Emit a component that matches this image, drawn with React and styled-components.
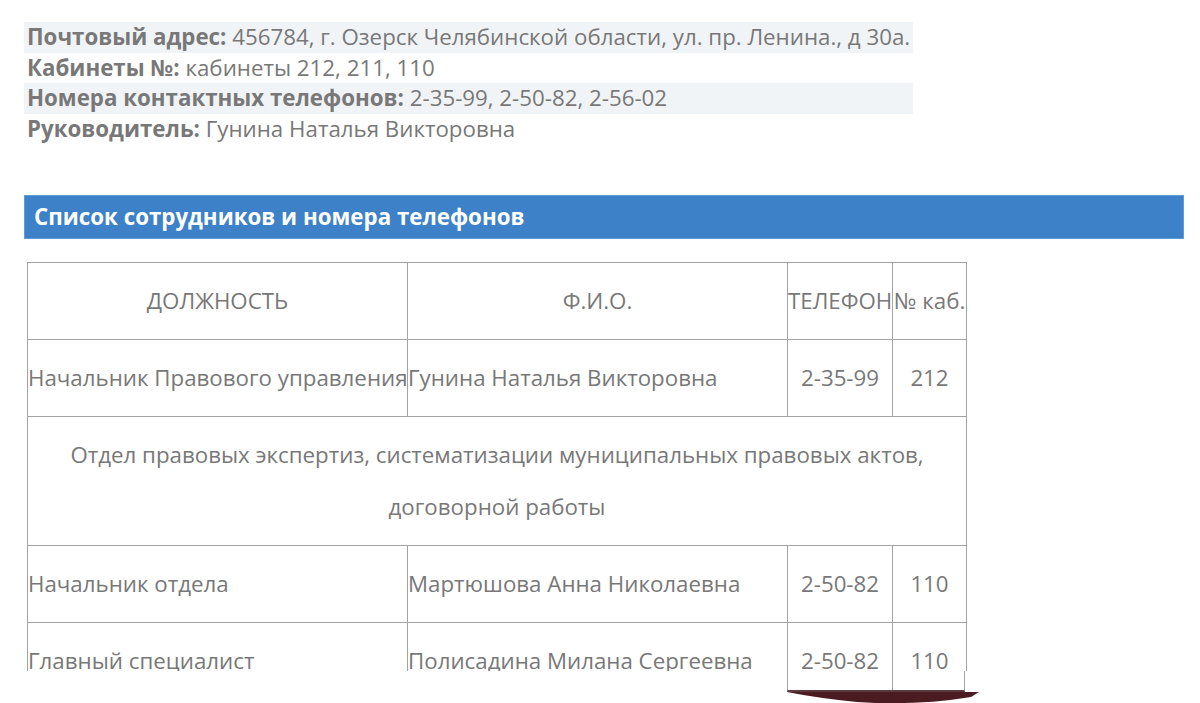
import React from 'react';
import styled, { createGlobalStyle } from 'styled-components';

const GlobalStyle = createGlobalStyle`
  html, body {
    margin: 0;
    padding: 0;
    background: #ffffff;
  }
  body {
    font-family: 'Open Sans', 'DejaVu Sans', sans-serif;
    color: #787878;
    font-size: 22.3px;
  }
`;

const Page = styled.div`
  padding: 21px 0 0 24px;
  width: 1184px;
  min-height: 703px;
  box-sizing: border-box;
`;

// Блок с контактной информацией
const InfoList = styled.div`
  display: inline-flex;
  flex-direction: column;
`;

const InfoRow = styled.div`
  padding: 0 3px;
  height: 30.5px;
  line-height: 30.5px;
  white-space: nowrap;
  background: ${(p) => (p.$striped ? '#f1f4f7' : 'transparent')};
`;

const Label = styled.b`
  font-weight: 700;
`;

// Синяя плашка с заголовком
const SectionBar = styled.div`
  margin-top: 51px;
  height: 44px;
  box-sizing: border-box;
  background: #3d82c8;
  border: 1px solid #5e9bd8;
  color: #ffffff;
  font-weight: 700;
  font-size: 22.3px;
  line-height: 42px;
  padding-left: 9px;
`;

const TableArea = styled.div`
  position: relative;
  margin: 23px 0 0 3px;
  width: 940px;
  padding-bottom: 34px;
`;

const TableClip = styled.div`
  height: 409px;
  overflow: hidden;
`;

const Table = styled.table`
  border-collapse: collapse;
  table-layout: fixed;
  width: 939px;
  color: #787878;
  font-size: 22.3px;
`;

const Cell = styled.td`
  border: 1px solid #a3a3a3;
  padding: 12px 0;
  line-height: 52px;
  vertical-align: middle;
  text-align: ${(p) => p.$align || 'left'};
  white-space: nowrap;
  overflow: visible;
`;

const WrapCell = styled(Cell)`
  white-space: normal;
  padding: 12px 20px;
`;

// Загнутый угол страницы под таблицей
const CurlEdge = styled.div`
  position: absolute;
  left: 760px;
  top: 409px;
  width: 178px;
  height: 21px;
  box-sizing: border-box;
  border-left: 1px solid #a3a3a3;
  border-right: 1px solid #a3a3a3;
  border-bottom: 2px solid #5a3a3e;
  display: grid;
  grid-template-columns: 105px 1fr;
`;

const CurlDivider = styled.div`
  border-right: 1px solid #a3a3a3;
`;

const CurlShadow = styled.svg`
  position: absolute;
  left: 760px;
  top: 430px;
  width: 192px;
  height: 13px;
`;

const rows = [
  { pos: 'Начальник Правового управления', name: 'Гунина Наталья Викторовна', tel: '2-35-99', room: '212' },
  { dept: 'Отдел правовых экспертиз, систематизации муниципальных правовых актов, договорной работы' },
  { pos: 'Начальник отдела', name: 'Мартюшова Анна Николаевна', tel: '2-50-82', room: '110' },
  { pos: 'Главный специалист', name: 'Полисадина Милана Сергеевна', tel: '2-50-82', room: '110' },
];

export default function App() {
  return (
    <>
      <GlobalStyle />
      <Page>
        <InfoList>
          <InfoRow $striped>
            <Label>Почтовый адрес:</Label> 456784, г. Озерск Челябинской области, ул. пр. Ленина., д 30а.
          </InfoRow>
          <InfoRow>
            <Label>Кабинеты №:</Label> кабинеты 212, 211, 110
          </InfoRow>
          <InfoRow $striped>
            <Label>Номера контактных телефонов:</Label> 2-35-99, 2-50-82, 2-56-02
          </InfoRow>
          <InfoRow>
            <Label>Руководитель:</Label> Гунина Наталья Викторовна
          </InfoRow>
        </InfoList>

        <SectionBar>Список сотрудников и номера телефонов</SectionBar>

        <TableArea>
          <TableClip>
            <Table>
              <colgroup>
                <col style={{ width: 380 }} />
                <col style={{ width: 380 }} />
                <col style={{ width: 105 }} />
                <col style={{ width: 74 }} />
              </colgroup>
              <tbody>
                <tr>
                  <Cell $align="center">ДОЛЖНОСТЬ</Cell>
                  <Cell $align="center">Ф.И.О.</Cell>
                  <Cell $align="center">ТЕЛЕФОН</Cell>
                  <Cell $align="center">№ каб.</Cell>
                </tr>
                {rows.map((r, i) =>
                  r.dept ? (
                    <tr key={i}>
                      <WrapCell colSpan={4} $align="center">{r.dept}</WrapCell>
                    </tr>
                  ) : (
                    <tr key={i}>
                      <Cell>{r.pos}</Cell>
                      <Cell>{r.name}</Cell>
                      <Cell $align="center">{r.tel}</Cell>
                      <Cell $align="center">{r.room}</Cell>
                    </tr>
                  )
                )}
              </tbody>
            </Table>
          </TableClip>
          <CurlEdge>
            <CurlDivider />
            <div />
          </CurlEdge>
          <CurlShadow viewBox="0 0 192 13">
            <path d="M0 0 L192 0 L184 5 Q130 14 70 10 Q30 6 0 0 Z" fill="#4a1c22" />
          </CurlShadow>
        </TableArea>
      </Page>
    </>
  );
}
